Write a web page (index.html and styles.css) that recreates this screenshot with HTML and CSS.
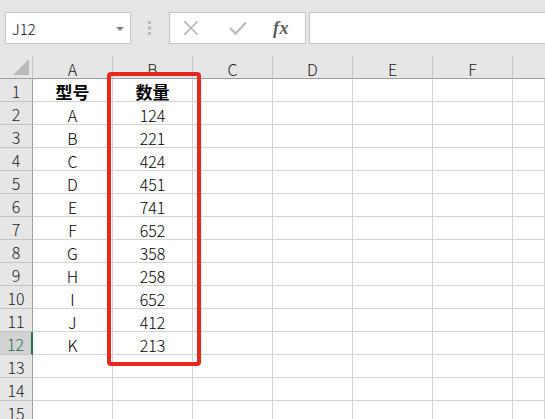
FILE: index.html
```html
<!DOCTYPE html>
<html>
<head>
<meta charset="utf-8">
<link rel="stylesheet" href="styles.css">
</head>
<body>
<div class="app">
  <div class="toolbar">
    <div class="namebox">
      <span class="name">J12</span>
      <svg class="caret" width="8" height="4" viewBox="0 0 8 4"><path d="M0 0H8L4 4Z" fill="#7a7a7a"/></svg>
    </div>
    <div class="sep">
      <svg width="4" height="14" viewBox="0 0 4 14"><rect x="0" y="0" width="3" height="3" fill="#b8b8b8"/><rect x="0" y="5.5" width="3" height="3" fill="#b8b8b8"/><rect x="0" y="11" width="3" height="3" fill="#b8b8b8"/></svg>
    </div>
    <div class="fxbox">
      <svg class="ico-x" width="16" height="14" viewBox="0 0 16 14"><path d="M1.5 0.5L14.5 13.5M14.5 0.5L1.5 13.5" stroke="#b4b4b4" stroke-width="1.6" fill="none"/></svg>
      <svg class="ico-ok" width="18" height="14" viewBox="0 0 18 14"><path d="M1 7L6.5 12.5L17 1.5" stroke="#bcbcbc" stroke-width="2.4" fill="none"/></svg>
      <span class="fx">fx</span>
    </div>
    <div class="formula"></div>
  </div>
  <div class="sheet">
    <div class="grid">
      <div class="hd corner"><svg width="16" height="16" viewBox="0 0 16 16"><path d="M16 0V16H0Z" fill="#b9b9b9"/></svg></div>
      <div class="hd col">A</div><div class="hd col">B</div><div class="hd col">C</div><div class="hd col">D</div><div class="hd col">E</div><div class="hd col">F</div><div class="hd col last"></div>

      <div class="hd row">1</div><div class="c b">型号</div><div class="c b">数量</div><div class="c"></div><div class="c"></div><div class="c"></div><div class="c"></div><div class="c"></div>
      <div class="hd row">2</div><div class="c">A</div><div class="c">124</div><div class="c"></div><div class="c"></div><div class="c"></div><div class="c"></div><div class="c"></div>
      <div class="hd row">3</div><div class="c">B</div><div class="c">221</div><div class="c"></div><div class="c"></div><div class="c"></div><div class="c"></div><div class="c"></div>
      <div class="hd row">4</div><div class="c">C</div><div class="c">424</div><div class="c"></div><div class="c"></div><div class="c"></div><div class="c"></div><div class="c"></div>
      <div class="hd row">5</div><div class="c">D</div><div class="c">451</div><div class="c"></div><div class="c"></div><div class="c"></div><div class="c"></div><div class="c"></div>
      <div class="hd row">6</div><div class="c">E</div><div class="c">741</div><div class="c"></div><div class="c"></div><div class="c"></div><div class="c"></div><div class="c"></div>
      <div class="hd row">7</div><div class="c">F</div><div class="c">652</div><div class="c"></div><div class="c"></div><div class="c"></div><div class="c"></div><div class="c"></div>
      <div class="hd row">8</div><div class="c">G</div><div class="c">358</div><div class="c"></div><div class="c"></div><div class="c"></div><div class="c"></div><div class="c"></div>
      <div class="hd row">9</div><div class="c">H</div><div class="c">258</div><div class="c"></div><div class="c"></div><div class="c"></div><div class="c"></div><div class="c"></div>
      <div class="hd row">10</div><div class="c">I</div><div class="c">652</div><div class="c"></div><div class="c"></div><div class="c"></div><div class="c"></div><div class="c"></div>
      <div class="hd row">11</div><div class="c">J</div><div class="c">412</div><div class="c"></div><div class="c"></div><div class="c"></div><div class="c"></div><div class="c"></div>
      <div class="hd row sel">12</div><div class="c">K</div><div class="c">213</div><div class="c"></div><div class="c"></div><div class="c"></div><div class="c"></div><div class="c"></div>
      <div class="hd row">13</div><div class="c"></div><div class="c"></div><div class="c"></div><div class="c"></div><div class="c"></div><div class="c"></div><div class="c"></div>
      <div class="hd row">14</div><div class="c"></div><div class="c"></div><div class="c"></div><div class="c"></div><div class="c"></div><div class="c"></div><div class="c"></div>
      <div class="hd row">15</div><div class="c"></div><div class="c"></div><div class="c"></div><div class="c"></div><div class="c"></div><div class="c"></div><div class="c"></div>
    </div>
    <div class="highlight"></div>
  </div>
</div>
</body>
</html>
```

FILE: styles.css
```css
* { box-sizing: border-box; }
html, body { margin: 0; padding: 0; }
body {
  width: 545px;
  height: 419px;
  overflow: hidden;
  background: #e6e6e6;
  font-family: "Noto Sans CJK SC", "Noto Sans", sans-serif;
  color: #000;
}
.app { width: 545px; height: 419px; overflow: hidden; }
.toolbar {
  display: flex;
  align-items: flex-start;
  height: 56px;
  padding: 12px 0 0 5px;
}
.namebox {
  width: 126px;
  height: 32px;
  background: #fff;
  border: 1px solid #c6c6c6;
  display: flex;
  align-items: center;
  justify-content: space-between;
  padding: 0 6px 0 6px;
}
.name { font-size: 15px; color: #111; line-height: 1; font-weight: 300; }
.caret { margin-top: 1px; }
.sep {
  width: 38px;
  height: 32px;
  display: flex;
  align-items: center;
  justify-content: center;
  padding-right: 1px;
}
.fxbox {
  width: 137px;
  height: 32px;
  background: #fff;
  border: 1px solid #c6c6c6;
  display: flex;
  align-items: center;
  padding-left: 13px;
}
.ico-x { margin-right: 30px; }
.ico-ok { margin-right: 26px; }
.fx {
  font-family: "Liberation Serif", serif;
  font-style: italic;
  font-weight: bold;
  font-size: 18px;
  color: #5a5a5a;
  line-height: 1;
  letter-spacing: 0.5px;
}
.formula {
  flex: 1;
  height: 32px;
  margin-left: 3px;
  margin-right: -10px;
  background: #fff;
  border: 1px solid #c6c6c6;
}
.sheet { position: relative; }
.grid {
  display: grid;
  grid-template-columns: 33px repeat(6, 80px) 1fr;
  grid-auto-rows: 23px;
  background: #fff;
}
.hd {
  background: #e6e6e6;
  color: #1a1a1a;
  font-size: 16px;
  font-weight: 300;
  display: flex;
  align-items: center;
  justify-content: center;
}
.col {
  border-right: 1px solid #c4c4c4;
  border-bottom: 1px solid #9e9e9e;
  padding-top: 3px;
}
.col.last { border-right: none; }
.corner {
  border-right: 1px solid #c4c4c4;
  border-bottom: 1px solid #9e9e9e;
  justify-content: flex-end;
  align-items: flex-end;
  padding: 0 3px 3px 0;
}
.row {
  border-right: 1px solid #9e9e9e;
  border-bottom: 1px solid #c4c4c4;
  padding-top: 2px;
}
.row.sel {
  background: #d2d2d2;
  color: #217346;
  border-right: 2px solid #217346;
}
.c {
  border-right: 1px solid #d4d4d4;
  border-bottom: 1px solid #d4d4d4;
  font-size: 16px;
  font-weight: 300;
  display: flex;
  align-items: center;
  justify-content: center;
  padding-top: 3px;
  color: #000;
}
.c.b { font-weight: bold; font-size: 17px; }
.highlight {
  position: absolute;
  left: 107px;
  top: 16px;
  width: 94px;
  height: 294px;
  border: 4px solid #e8281e;
  border-radius: 4px;
}
```
